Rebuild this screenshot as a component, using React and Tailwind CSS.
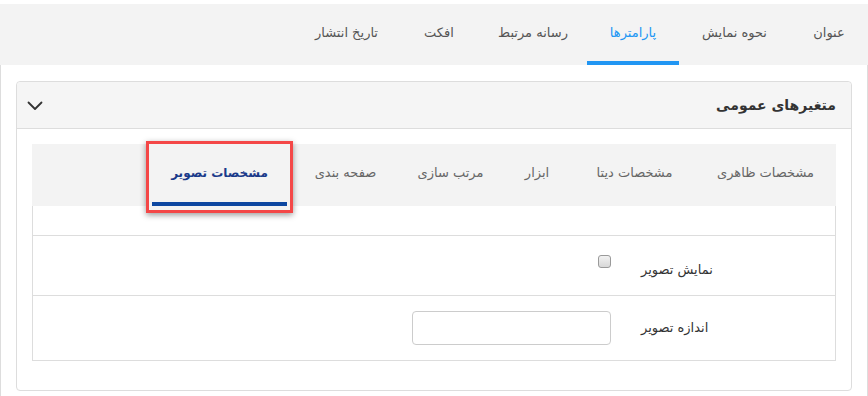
import React from "react";

const topTabs = [
  ["عنوان", "w-[78px]"],
  ["نحوه نمایش", "w-[111px]"],
  ["پارامترها", "w-[92px]"],
  ["رسانه مرتبط", "w-[108px]"],
  ["افکت", "w-[80px]"],
  ["تاریخ انتشار", "w-[105px]"],
];
const innerTabs = [
  ["مشخصات ظاهری", "w-[141px]"],
  ["مشخصات دیتا", "w-[121px]"],
  ["ابزار", "w-[74px]"],
  ["مرتب سازی", "w-[99px]"],
  ["صفحه بندی", "w-[111px]"],
];

export default function App() {
  return (
    <div
      dir="rtl"
      className="w-[868px] h-[396px] bg-white pt-[4px] overflow-hidden"
      style={{ fontFamily: '"DejaVu Sans", sans-serif' }}
    >
      {/* top tabs */}
      <div className="h-[61px] bg-[#f3f3f3] flex">
        {topTabs.map(([t, w], i) => (
          <div
            key={t}
            className={
              i === 2
                ? `${w} h-full flex items-center justify-center text-[13px] border-b-4 border-[#2196f3] text-[#2196f3]`
                : `${w} h-full flex items-center justify-center text-[13px] border-b-4 border-transparent text-[#555]`
            }
          >
            {t}
          </div>
        ))}
      </div>

      {/* panel */}
      <div className="h-[331px] border-x border-[#ddd] pt-[16px] px-[15px]">
        <div className="border border-[#ddd] rounded-[4px] bg-white">
          <div className="h-[47px] bg-[#f5f5f5] border-b border-[#ddd] rounded-t-[4px] flex items-center justify-between pr-[15px] pl-[10px]">
            <div className="text-[14px] font-bold text-[#333]">متغیرهای عمومی</div>
            <svg width="16" height="10" viewBox="0 0 16 10" className="mt-[1px]">
              <path d="M1.5 1.5 L8 8 L14.5 1.5" fill="none" stroke="#333" strokeWidth="1.8" strokeLinecap="round" strokeLinejoin="round" />
            </svg>
          </div>

          <div className="pt-[15px] px-[15px] pb-[29px]">
            {/* inner tabs */}
            <div className="h-[62px] bg-[#f3f3f3] flex">
              {innerTabs.map(([t, w]) => (
                <div key={t} className={`${w} h-full pb-[4px] flex items-center justify-center text-[13px] text-[#666]`}>
                  {t}
                </div>
              ))}
              <div className="relative h-full w-[141px] flex items-center justify-center pb-[4px]">
                <div className="absolute -top-[3px] -bottom-[7px] -left-[3px] -right-[3px] border-[3px] border-[#f44747] bg-[#f3f3f3] shadow-[0_2px_6px_rgba(0,0,0,0.4)]" />
                <div className="absolute bottom-0 left-[3px] right-[3px] h-[4px] bg-[#0d47a1]" />
                <span className="relative text-[12px] font-bold text-[#1a3a8a]">مشخصات تصویر</span>
              </div>
            </div>

            {/* content */}
            <div className="border-x border-b border-[#ddd]">
              <div className="h-[30px] border-b border-[#ddd]" />
              <div className="h-[60px] border-b border-[#ddd] flex items-start gap-[30px]">
                <div className="w-[194px] text-left text-[13px] text-[#333] leading-[20px] pt-[24px]">نمایش تصویر</div>
                <span className="mt-[19px] w-[13px] h-[13px] rounded-[3px] border border-[#9a9a9a] bg-gradient-to-b from-[#f2f2f2] to-[#d8d8d8]" />
              </div>
              <div className="h-[64px] flex items-center gap-[30px]">
                <div className="w-[194px] text-left text-[13px] text-[#333] leading-[20px]">اندازه تصویر</div>
                <div className="w-[199px] h-[34px] border border-[#ccc] rounded-[4px] bg-white" />
              </div>
            </div>
          </div>
        </div>
      </div>
    </div>
  );
}
